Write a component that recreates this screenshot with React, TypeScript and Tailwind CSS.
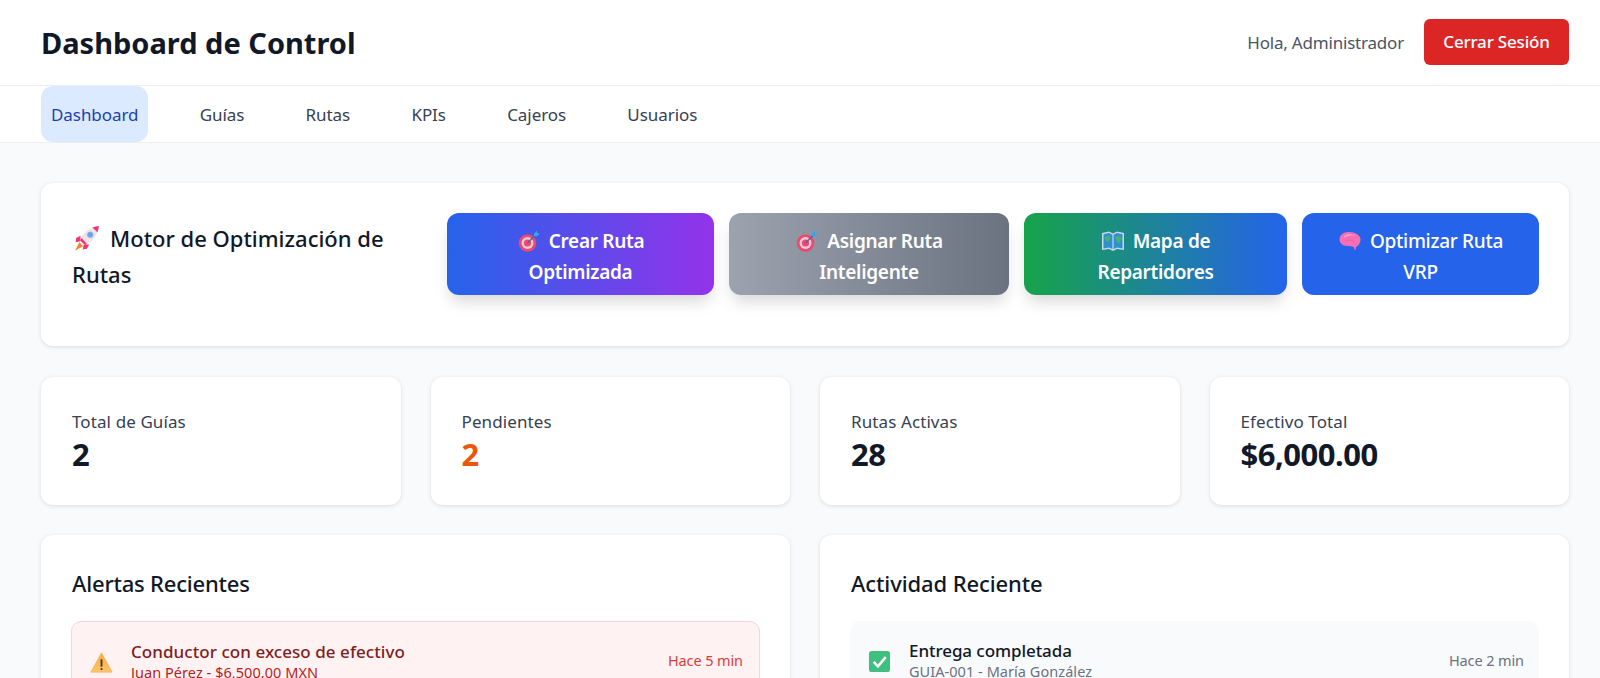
import React from "react";

const RocketIcon = () => (
  <svg viewBox="0 0 24 24" className="w-[26px] h-[26px] shrink-0 ml-[2px]">
    <path d="M5 16 L1 23.5 L8.5 19.5 Z" fill="#f9852b" />
    <path d="M6 10 L2 12 L1.5 16 L6 15 Z" fill="#f0386f" />
    <path d="M14 18 L12 22 L8 22.5 L9 18 Z" fill="#f0386f" />
    <path d="M5.5 14 C8 7.5 14 2.5 23 1 C22 9.5 17 16 10 18.5 Z" fill="#ece4ea" />
    <path d="M17 2.4 C19 1.7 21 1.3 23 1 C22.8 3 22.3 5 21.6 6.8 Z" fill="#f0386f" />
    <path d="M5.5 14 L10 18.5 L12 17.5 L7 12 Z" fill="#f0386f" />
    <circle cx="15" cy="9" r="2.6" fill="#5aa9ee" stroke="#a9a6d6" strokeWidth="0.8" />
  </svg>
);

const TargetIcon = () => (
  <svg viewBox="0 0 24 24" className="w-[24px] h-[24px] shrink-0">
    <circle cx="10.5" cy="14" r="8.8" fill="#ea4a72" />
    <circle cx="10.5" cy="14" r="6" fill="#f6c9d5" />
    <circle cx="10.5" cy="14" r="3.6" fill="#ea4a72" />
    <path d="M10.5 14 L19 5.5" stroke="#4b6a96" strokeWidth="1.5" />
    <path d="M17 5 L19.5 1.5 L20.2 4 L23 4.6 L19.5 7.5 L17 7 Z" fill="#35a7ec" />
  </svg>
);

const MapIcon = () => (
  <svg viewBox="0 0 24 24" className="w-[24px] h-[24px] shrink-0">
    <path d="M1 4 L8 2.5 L12 4.5 L16 2.5 L23 4 V21 L16 20 L12 22 L8 20 L1 21 Z" fill="#c9d6ea" />
    <path d="M2.5 5.2 L8 4 L11.4 5.8 V20 L8 18.5 L2.5 19.4 Z" fill="#2f8fd0" />
    <path d="M12.6 5.8 L16 4 L21.5 5.2 V19.4 L16 18.5 L12.6 20 Z" fill="#2f8fd0" />
    <path d="M3.5 8 L8 6.5 L9.5 9.5 L7 13 L5 12 Z M14 8 L19 7 L20.5 10 L18 15 L15.5 12 Z" fill="#45b36b" />
  </svg>
);

const BrainIcon = () => (
  <svg viewBox="0 0 24 24" className="w-[24px] h-[24px] shrink-0">
    <path
      d="M11 3 C6 2.5 1.5 6 1.5 10.5 C1.5 14.5 5 16.8 9.5 17 C12 17 14 17.5 16 18 L16.5 21 C17.5 21 18 20 18 18 C21 16.5 22.8 13.5 22.5 10 C22 6 17 3 11 3 Z"
      fill="#f56fb2"
    />
    <path d="M6 7 C9 4.5 14 4.5 17 7 C14 6.5 9 6.5 6 9 Z" fill="#fa9ccc" />
    <path d="M8 12 C11 10.5 14 11 16 13" stroke="#e85aa3" strokeWidth="0.8" fill="none" />
  </svg>
);

const WarningIcon = () => (
  <svg viewBox="0 0 24 24" className="w-[23px] h-[23px] shrink-0">
    <defs>
      <linearGradient id="warn" x1="0" y1="0" x2="0" y2="1">
        <stop offset="0" stopColor="#f9a93e" />
        <stop offset="1" stopColor="#fdc46f" />
      </linearGradient>
    </defs>
    <path d="M12 2 L23 22 H1 Z" fill="url(#warn)" stroke="#fbb653" strokeLinejoin="round" />
    <rect x="11" y="8.5" width="2" height="8" rx="0.6" fill="#4d3a2c" />
    <rect x="11" y="17.8" width="2" height="2" rx="0.6" fill="#4d3a2c" />
  </svg>
);

const CheckIcon = () => (
  <svg viewBox="0 0 24 24" className="w-[23px] h-[23px] shrink-0 mb-[2px]">
    <rect x="1" y="1" width="22" height="22" rx="3" fill="#40bf80" />
    <path d="M6 12.5 L10.3 17 L18.5 7.5" stroke="#fff" strokeWidth="2.6" fill="none" />
  </svg>
);

const tabs = ["Dashboard", "Guías", "Rutas", "KPIs", "Cajeros", "Usuarios"];

const actions = [
  { icon: <TargetIcon />, top: "Crear Ruta", bottom: "Optimizada", cls: "w-[267px] bg-[linear-gradient(to_right,#2563eb,#9333ea)] font-semibold shadow-[0_10px_15px_-3px_rgba(0,0,0,0.15)]" },
  { icon: <TargetIcon />, top: "Asignar Ruta", bottom: "Inteligente", cls: "w-[280px] bg-[linear-gradient(to_right,#9ca3af,#6b7280)] font-semibold shadow-[0_10px_15px_-3px_rgba(0,0,0,0.15)]" },
  { icon: <MapIcon />, top: "Mapa de", bottom: "Repartidores", cls: "w-[263px] bg-[linear-gradient(to_right,#16a34a,#2563eb)] font-semibold shadow-[0_10px_15px_-3px_rgba(0,0,0,0.15)]" },
  { icon: <BrainIcon />, top: "Optimizar Ruta", bottom: "VRP", cls: "w-[237px] bg-[#2563eb] font-medium" },
];

const stats = [
  { label: "Total de Guías", value: "2", color: "text-[#111827]" },
  { label: "Pendientes", value: "2", color: "text-[#ea580c]" },
  { label: "Rutas Activas", value: "28", color: "text-[#111827]" },
  { label: "Efectivo Total", value: "$6,000.00", color: "text-[#111827]" },
];

const cardCls = "bg-white rounded-xl shadow-[0_1px_4px_rgba(0,0,0,0.12)]";

export default function App() {
  return (
    <div className="h-[678px] overflow-hidden bg-[#f9fafb] font-['Noto_Sans',sans-serif] text-[#111827]">
      <header className="h-[86px] bg-white border-b border-[#eceef1] pl-[41px] pr-[31px] pt-[1px] flex items-center justify-between">
        <h1 className="text-[29px] font-bold">Dashboard de Control</h1>
        <div className="flex items-center gap-5">
          <span className="text-[17px] text-[#4b5563] tracking-[-0.2px]">Hola, Administrador</span>
          <button className="w-[145px] h-[46px] mb-[3px] rounded-md bg-[#dc2626] text-white text-[17px] font-medium tracking-[-0.2px]">
            Cerrar Sesión
          </button>
        </div>
      </header>

      <nav className="h-[57px] bg-white border-b border-[#eceef1] pl-[41px] flex gap-[41.3px]">
        {tabs.map((t, i) => (
          <a
            key={t}
            className={
              "flex items-center px-[10px] pt-[2px] rounded-xl text-[17px] tracking-[-0.07px] " +
              (i === 0 ? "bg-[#dbeafe] text-[#1e40af]" : "text-[#374151]")
            }
          >
            {t}
          </a>
        ))}
      </nav>

      <main className="pl-[41px] pr-[31px] pt-[40px] flex flex-col gap-[30px]">
        <section className={cardCls + " h-[163px] mb-[1px] pl-[31px] pr-[30px] pt-[30px] flex justify-between"}>
          <h2 className="w-[335px] text-[22px] font-medium leading-[36px] pt-[4px]">
            <span className="inline-flex items-center gap-[10px] align-middle whitespace-nowrap">
              <RocketIcon /> Motor de Optimización de
            </span>{" "}
            Rutas
          </h2>
          <div className="flex gap-[15px]">
            {actions.map((a) => (
              <button
                key={a.bottom}
                className={"h-[82px] pt-[5px] rounded-xl text-white text-[19px] leading-[31px] tracking-[-0.3px] flex flex-col items-center justify-center " + a.cls}
              >
                <span className="flex items-center gap-2">
                  {a.icon}
                  {a.top}
                </span>
                <span>{a.bottom}</span>
              </button>
            ))}
          </div>
        </section>

        <section className="grid grid-cols-4 gap-[30px]">
          {stats.map((s) => (
            <div key={s.label} className={cardCls + " h-[128px] pl-[31px] pr-[30px] pt-[31px]"}>
              <p className="text-[17px] leading-[27px] text-[#374151] tracking-[0.1px]">{s.label}</p>
              <p className={"text-[31px] leading-[38px] font-bold tracking-[-0.5px] " + s.color}>{s.value}</p>
            </div>
          ))}
        </section>

        <section className="grid grid-cols-2 gap-[30px]">
          <div className={cardCls + " p-[30px]"}>
            <h3 className="ml-[1px] text-[22px] leading-[36px] font-medium tracking-[-0.2px] mb-[20px]">Alertas Recientes</h3>
            <div className="h-[82px] rounded-[10px] bg-[#fef2f2] border border-[#fbd5d5] pl-[18px] pr-[16px] flex items-center gap-[18px]">
              <WarningIcon />
              <div className="flex-1 self-start pt-[20px]">
                <p className="text-[17px] leading-[20px] font-medium text-[#7f1d1d] tracking-[0.05px]">Conductor con exceso de efectivo</p>
                <p className="text-[14.5px] leading-[20px] text-[#b91c1c] tracking-[0.05px]">Juan Pérez - $6,500.00 MXN</p>
              </div>
              <span className="pb-[2px] text-[14.5px] text-[#dc3b3b] tracking-[-0.1px]">Hace 5 min</span>
            </div>
          </div>
          <div className={cardCls + " p-[30px]"}>
            <h3 className="ml-[1px] text-[22px] leading-[36px] font-medium tracking-[-0.1px] mb-[20px]">Actividad Reciente</h3>
            <div className="h-[82px] rounded-[10px] bg-[#f9fafb] pl-[18px] pr-[15px] flex items-center gap-[18px]">
              <CheckIcon />
              <div className="flex-1 self-start pt-[20px]">
                <p className="text-[17px] leading-[20px] font-medium tracking-[-0.07px]">Entrega completada</p>
                <p className="text-[14.5px] leading-[20px] text-[#6b7280] tracking-[0.05px]">GUIA-001 - María González</p>
              </div>
              <span className="pb-[3px] text-[14.5px] text-[#6b7280] tracking-[-0.1px]">Hace 2 min</span>
            </div>
          </div>
        </section>
      </main>
    </div>
  );
}
